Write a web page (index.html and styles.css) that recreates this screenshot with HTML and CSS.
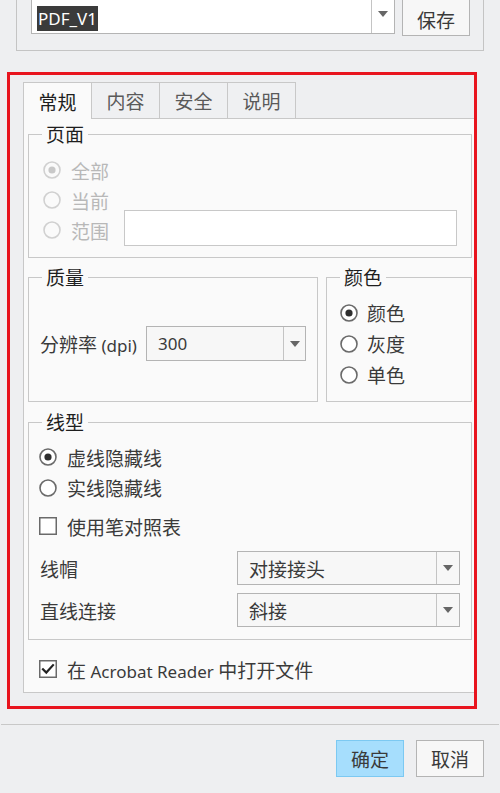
FILE: index.html
```html
<!DOCTYPE html>
<html lang="zh-CN">
<head>
<meta charset="utf-8">
<title>PDF 导出设置</title>
<link rel="stylesheet" href="styles.css">
</head>
<body>
<div class="toppanel">
  <div class="combo combo-top">
    <div class="combo-field"><span class="sel lat">PDF_V1</span></div>
    <div class="combo-arrow"><span class="tri"></span></div>
  </div>
  <button class="btn btn-save">保存</button>
</div>

<div class="frame">
  <div class="tabs">
    <div class="tab active">常规</div>
    <div class="tab">内容</div>
    <div class="tab">安全</div>
    <div class="tab last">说明</div>
  </div>
  <div class="panel">
    <fieldset class="group group-page">
      <legend>页面</legend>
      <div class="rows rows-page">
        <div class="row row30 disabled">
          <svg class="radio" viewBox="0 0 18 18"><circle cx="9" cy="9" r="8" class="ring dis"/><circle cx="9" cy="9" r="3.6" class="dot dis"/></svg>
          <span class="lbl">全部</span>
        </div>
        <div class="row row30 disabled">
          <svg class="radio" viewBox="0 0 18 18"><circle cx="9" cy="9" r="8" class="ring dis"/></svg>
          <span class="lbl">当前</span>
        </div>
        <div class="row row30 disabled">
          <svg class="radio" viewBox="0 0 18 18"><circle cx="9" cy="9" r="8" class="ring dis"/></svg>
          <span class="lbl">范围</span>
          <div class="range-input"></div>
        </div>
      </div>
    </fieldset>

    <div class="pair">
      <fieldset class="group group-quality">
        <legend>质量</legend>
        <div class="quality-row">
          <span class="qlabel">分辨率<span class="lat"> (dpi)</span></span>
          <div class="combo combo-dpi">
            <div class="combo-field"><span class="lat">300</span></div>
            <div class="combo-arrow"><span class="tri"></span></div>
          </div>
        </div>
      </fieldset>
      <fieldset class="group group-color">
        <legend>颜色</legend>
        <div class="rows rows-color">
          <div class="row row31">
            <svg class="radio" viewBox="0 0 18 18"><circle cx="9" cy="9" r="8" class="ring"/><circle cx="9" cy="9" r="3.6" class="dot"/></svg>
            <span class="lbl">颜色</span>
          </div>
          <div class="row row31">
            <svg class="radio" viewBox="0 0 18 18"><circle cx="9" cy="9" r="8" class="ring"/></svg>
            <span class="lbl">灰度</span>
          </div>
          <div class="row row31">
            <svg class="radio" viewBox="0 0 18 18"><circle cx="9" cy="9" r="8" class="ring"/></svg>
            <span class="lbl">单色</span>
          </div>
        </div>
      </fieldset>
    </div>

    <fieldset class="group group-line">
      <legend>线型</legend>
      <div class="rows rows-line">
        <div class="row row30">
          <svg class="radio" viewBox="0 0 18 18"><circle cx="9" cy="9" r="8" class="ring"/><circle cx="9" cy="9" r="3.6" class="dot"/></svg>
          <span class="lbl">虚线隐藏线</span>
        </div>
        <div class="row row31">
          <svg class="radio" viewBox="0 0 18 18"><circle cx="9" cy="9" r="8" class="ring"/></svg>
          <span class="lbl">实线隐藏线</span>
        </div>
        <div class="row row30 row-check">
          <svg class="check" viewBox="0 0 18 18"><rect x="0.75" y="0.75" width="16.5" height="16.5" class="box"/></svg>
          <span class="lbl">使用笔对照表</span>
        </div>
        <div class="field-row first">
          <span class="flabel">线帽</span>
          <div class="combo combo-wide">
            <div class="combo-field">对接接头</div>
            <div class="combo-arrow"><span class="tri"></span></div>
          </div>
        </div>
        <div class="field-row">
          <span class="flabel">直线连接</span>
          <div class="combo combo-wide">
            <div class="combo-field">斜接</div>
            <div class="combo-arrow"><span class="tri"></span></div>
          </div>
        </div>
      </div>
    </fieldset>

    <div class="row row30 row-acrobat">
      <svg class="check" viewBox="0 0 18 18"><rect x="0.75" y="0.75" width="16.5" height="16.5" class="box"/><path d="M4 9.2 L7.3 12.6 L14 5.2" class="mark"/></svg>
      <span class="lbl">在<span class="lat"> Acrobat Reader </span>中打开文件</span>
    </div>
  </div>
</div>

<div class="separator"></div>
<div class="buttons">
  <button class="btn btn-ok">确定</button>
  <button class="btn btn-cancel">取消</button>
</div>
</body>
</html>
```
FILE: styles.css
```css
* { box-sizing: border-box; }
html, body { margin: 0; padding: 0; }
body {
  width: 500px;
  height: 793px;
  overflow: hidden;
  background: #eeeff1;
  font-family: "Noto Sans CJK SC", "Noto Sans", sans-serif;
  font-size: 19px;
  color: #3a3a3a;
}
.lat {
  font-family: "Noto Sans", "Noto Sans CJK SC", sans-serif;
  font-size: 17px;
}

/* top panel */
.toppanel {
  margin: -12px 0 0 16px;
  width: 468px;
  height: 63px;
  border: 1px solid #c4c4c4;
  display: flex;
  align-items: flex-start;
  padding: 5px 0 0 14px;
}
.combo {
  display: flex;
  border: 1px solid #b4b4b4;
  background: #f7f7f7;
}
.combo-top {
  width: 364px;
  height: 40px;
  background: #fff;
}
.combo-top .combo-field {
  padding: 11px 0 0 5px;
  align-items: flex-start;
}
.sel {
  display: inline-block;
  background: #3b3b3b;
  color: #fff;
  line-height: 25px;
  height: 25px;
  padding: 0 1px;
}
.combo-field {
  flex: 1;
  display: flex;
  align-items: center;
}
.combo-arrow {
  width: 23px;
  border-left: 1px solid #c4c4c4;
  display: flex;
  align-items: center;
  justify-content: center;
}
.tri {
  width: 0;
  height: 0;
  border-left: 5px solid transparent;
  border-right: 5px solid transparent;
  border-top: 6px solid #666;
}
.btn {
  font-family: inherit;
  font-size: 19px;
  color: #3a3a3a;
  border: 1px solid #b4b4b4;
  background: #f7f7f7;
  padding: 0;
  width: 68px;
  height: 37px;
  line-height: 1;
}
.btn-save {
  margin-left: 7px;
  height: 42px;
  padding-top: 9px;
}

/* red frame */
.frame {
  margin: 21px 0 0 7px;
  width: 470px;
  height: 637px;
  border: 3px solid #e8141e;
  overflow: hidden;
  padding: 7px 0 0 13px;
}
.tabs {
  display: flex;
  height: 36px;
}
.tab {
  width: 68px;
  height: 36px;
  border: 1px solid #c8c8c8;
  border-right: none;
  border-bottom: none;
  background: #eff0f2;
  color: #5a5a5a;
  display: flex;
  align-items: center;
  justify-content: center;
}
.tab.last { border-right: 1px solid #c8c8c8; width: 69px; }
.tab.active {
  background: #fafafa;
  color: #1e1e1e;
  height: 37px;
  position: relative;
  z-index: 1;
}
.panel {
  width: 462px;
  height: 575px;
  border: 1px solid #c8c8c8;
  background: #fafafa;
  padding: 3px 0 0 4px;
}

/* group boxes */
.group {
  margin: 0;
  padding: 0;
  border: 1px solid #c8c8c8;
  min-width: 0;
}
.group legend {
  margin-left: 13px;
  padding: 0 4px;
  line-height: 24px;
  height: 24px;
  color: #1e1e1e;
}
.group-page, .group-line { width: 444px; }
.rows-page { padding: 9px 0 12px 14px; }
.row {
  display: flex;
  align-items: center;
}
.row30 { height: 30px; }
.row31 { height: 31px; }
.radio {
  width: 18px;
  height: 18px;
  flex: none;
}
.ring { fill: #fff; stroke: #6a6a6a; stroke-width: 1.6; }
.ring.dis { stroke: #d0d0d0; fill: #fafafa; }
.dot { fill: #2e2e2e; }
.dot.dis { fill: #c8c8c8; }
.lbl { margin-left: 10px; white-space: nowrap; }
.disabled .lbl { color: #b8b8b8; }
.range-input {
  align-self: flex-start;
  margin: -5px 0 0 15px;
  width: 333px;
  height: 36px;
  border: 1px solid #c8c8c8;
  background: #fff;
}

.pair {
  display: flex;
  gap: 8px;
  margin-top: 7px;
}
.group-quality { width: 290px; }
.group-color { width: 146px; }
.quality-row {
  display: flex;
  align-items: center;
  padding: 37px 0 0 11px;
}
.qlabel { white-space: nowrap; width: 106px; }
.combo-dpi {
  width: 160px;
  height: 35px;
}
.combo-dpi .combo-field { padding-left: 11px; }
.combo-dpi .combo-arrow { width: 22px; }
.rows-color { padding: 8px 0 11px 13px; }
.rows-color .lbl { margin-left: 9px; }

.group-line { margin-top: 8px; }
.rows-line { padding: 8px 11px 12px 10px; }
.row-check { margin-top: 8px; }
.check { width: 18px; height: 18px; flex: none; }
.box { fill: #fff; stroke: #6a6a6a; stroke-width: 1.5; }
.mark { fill: none; stroke: #222; stroke-width: 2.2; stroke-linecap: square; }
.field-row {
  display: flex;
  align-items: center;
  margin-top: 8px;
}
.field-row.first { margin-top: 10px; }
.flabel { margin-left: 1px; }
.combo-wide {
  margin-left: auto;
  width: 223px;
  height: 34px;
}
.combo-wide .combo-field { padding-left: 11px; }

.row-acrobat {
  margin: 14px 0 0 11px;
}

/* bottom */
.separator {
  margin: 15px 1px 0 1px;
  height: 1px;
  background: #c8c8c8;
}
.buttons {
  display: flex;
  justify-content: flex-end;
  gap: 12px;
  padding: 15px 16px 0 0;
}
.btn-ok {
  background: #a6defd;
  border-color: #7cc9f2;
}
```
